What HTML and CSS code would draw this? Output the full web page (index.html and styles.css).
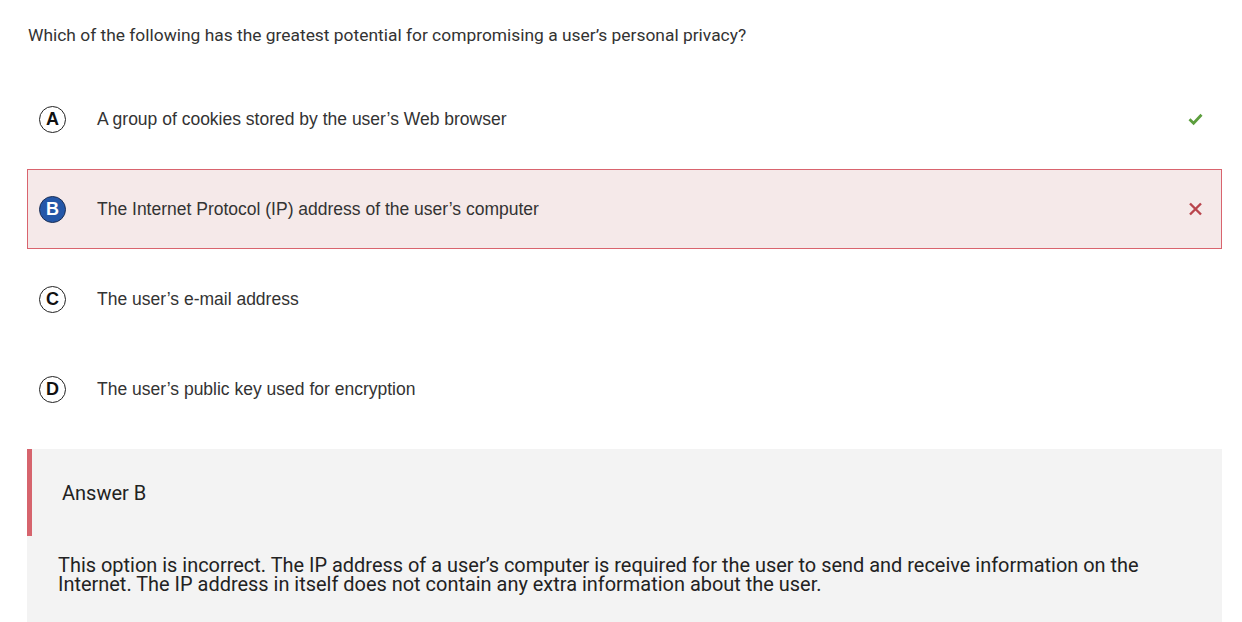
FILE: index.html
```html
<!DOCTYPE html>
<html>
<head>
<meta charset="utf-8">
<link rel="stylesheet" href="styles.css">
</head>
<body>
<div class="quiz">
  <p class="question">Which of the following has the greatest potential for compromising a user’s personal privacy?</p>
  <div class="options">
    <div class="option">
      <span class="badge">A</span>
      <span class="label">A group of cookies stored by the user’s Web browser</span>
      <svg class="mark" viewBox="0 0 15 14" width="15" height="14"><path d="M1.5 7.2 L5.6 11.2 L13.5 2.8" fill="none" stroke="#5c9e3d" stroke-width="2.8"/></svg>
    </div>
    <div class="option wrong">
      <span class="badge selected">B</span>
      <span class="label">The Internet Protocol (IP) address of the user’s computer</span>
      <svg class="mark" viewBox="0 0 15 14" width="15" height="14"><path d="M2 1.5 L13 12.5 M13 1.5 L2 12.5" fill="none" stroke="#b9444c" stroke-width="2.4"/></svg>
    </div>
    <div class="option">
      <span class="badge">C</span>
      <span class="label">The user’s e-mail address</span>
    </div>
    <div class="option">
      <span class="badge">D</span>
      <span class="label">The user’s public key used for encryption</span>
    </div>
  </div>
  <div class="feedback">
    <div class="feedback-head">Answer B</div>
    <p class="feedback-text">This option is incorrect. The IP address of a user’s computer is required for the user to send and receive information on the Internet. The IP address in itself does not contain any extra information about the user.</p>
  </div>
</div>
</body>
</html>
```
FILE: styles.css
```css
html, body {
  margin: 0;
  padding: 0;
  background: #ffffff;
}
.quiz {
  width: 1195px;
  margin-left: 27px;
  padding-top: 25px;
}
.question {
  margin: 0 0 34px 1px;
  font-family: Roboto, sans-serif;
  font-size: 17.4px;
  line-height: 20px;
  color: #333333;
}
.options {
  display: flex;
  flex-direction: column;
  gap: 10px;
}
.option {
  display: flex;
  align-items: center;
  height: 80px;
  box-sizing: border-box;
  padding: 0 18px 0 11px;
  border: 1px solid transparent;
  font-family: "Liberation Sans", Arial, sans-serif;
  font-size: 17.5px;
  color: #333333;
}
.option.wrong {
  background: #f5e9e9;
  border-color: #d9646e;
}
.badge {
  width: 27px;
  height: 27px;
  box-sizing: border-box;
  border: 1.5px solid #222222;
  border-radius: 50%;
  display: flex;
  align-items: center;
  justify-content: center;
  font-family: "Liberation Sans", Arial, sans-serif;
  font-weight: bold;
  font-size: 18px;
  color: #111111;
  flex: none;
  margin-right: 31px;
}
.badge.selected {
  background: #2457a8;
  border-color: #1b2f55;
  color: #ffffff;
}
.label {
  flex: 1;
}
.mark {
  flex: none;
  display: block;
}
.feedback {
  margin-top: 20px;
  background: #f3f3f3;
  padding-bottom: 28px;
}
.feedback-head {
  height: 87px;
  box-sizing: border-box;
  border-left: 5px solid #d6646d;
  padding-left: 30px;
  display: flex;
  align-items: center;
  font-family: Roboto, sans-serif;
  font-size: 20px;
  color: #222222;
}
.feedback-text {
  margin: 20px 70px 0 31px;
  font-family: Roboto, sans-serif;
  font-size: 19.95px;
  line-height: 19px;
  color: #222222;
}
```
